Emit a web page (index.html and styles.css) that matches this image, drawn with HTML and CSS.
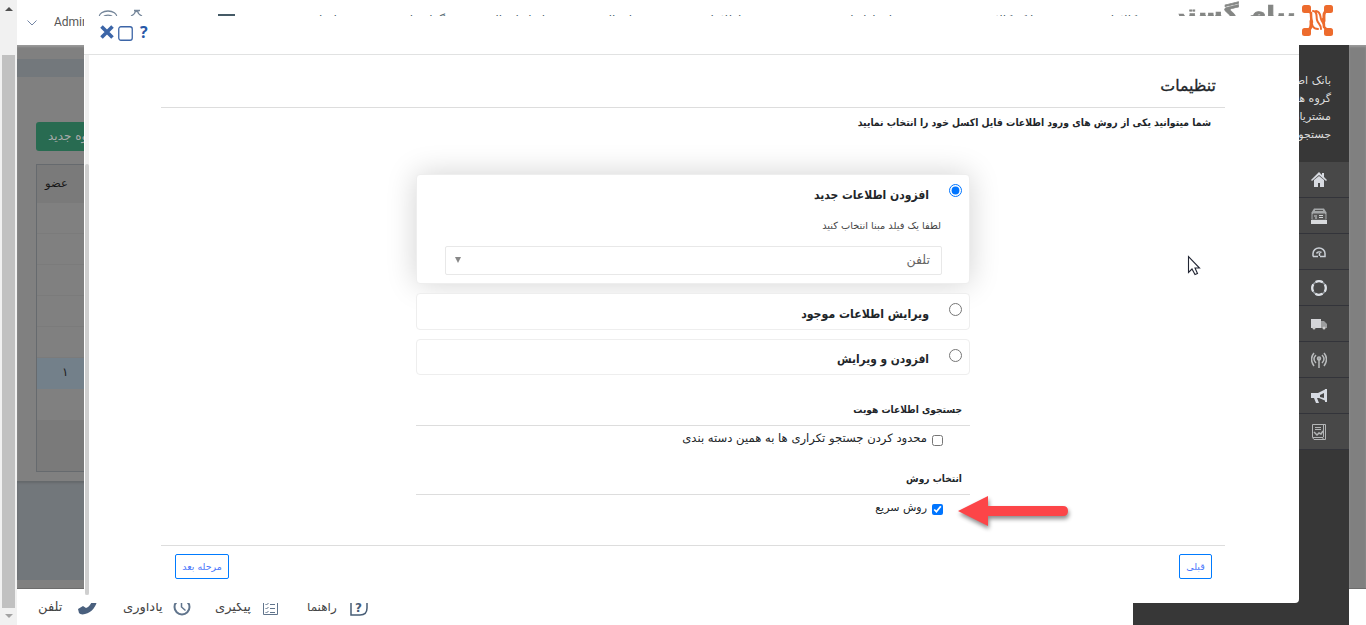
FILE: index.html
```html
<!DOCTYPE html>
<html lang="fa">
<head>
<meta charset="utf-8">
<title>تنظیمات</title>
<link rel="stylesheet" href="styles.css">
</head>
<body>
<div class="window">
  <div class="scrollbar">
    <span class="arrow up"></span><span class="thumb"></span><span class="arrow down"></span>
  </div>
  <div class="page">
    <header class="topbar">
      <svg class="chevron" width="10" height="6" viewBox="0 0 10 6"><path d="M.5.5 5 5 9.500.5" fill="none" stroke="#7385a5"/></svg>
      <span class="user">Admin</span>
      <svg class="top-icons" width="145" height="20" viewBox="0 0 145 20" fill="none" stroke="#75869a" stroke-width="1.300"><path d="M1 12a9 6 0 0 1 18 0M5 12a6 4 0 0 1 10 0M33 11c2-1 4-3 4-4a2 2 0 0 1 3 0c0 1 2 3 4 4M36 5.500h6"/><path d="M120 10h17" stroke="#455a66" stroke-width="2"/></svg>
      <nav class="nav" dir="rtl">
        <span>کالاها</span><span>بانک کالا</span><span>ارتباط با مشتری</span><span>مدیریت اطلاعات</span><span>انتقال</span><span>ابزار انتقال</span><span>گزارشات</span><span>تنظیمات</span>
      </nav>
      <span class="brand" dir="rtl">پیام گستر</span>
      <svg class="logo" width="31" height="31" viewBox="0 0 31 31"><g fill="#ed6b2d"><rect width="9" height="8" rx="2.500"/><rect x="22" width="9" height="8" rx="2.500"/><rect y="23" width="9" height="8" rx="2.500"/><rect x="22" y="23" width="9" height="8" rx="2.500"/></g><g fill="none" stroke="#ed6b2d" stroke-linecap="round"><path d="M6 6l3 2q0 7 1 9M25 25l-3-3q0-6-1-8" stroke-width="2.500"/><path d="M11 6c5 0 3 6 4 9 1 4 4 4 4 9M14 6c5 1 4 5 5 8 1 4 3 3 3 8M9 13c0 6 2 11 7 11" stroke-width="2"/><path d="M25 6c-4 1-3 5-3 10M6 25c4-1 3-5 3-9" stroke-width="3"/></g></svg>
    </header>
    <main class="workspace">
      <section class="content">
        <div class="crumb"></div>
        <div class="panel">
          <div class="new-group" dir="rtl">گروه جدید</div>
          <div class="grid">
            <div class="grid-head">عضو</div>
            <div class="row"></div><div class="row"></div><div class="row"></div><div class="row"></div><div class="row"></div>
            <div class="row active">۱</div><div class="row plain"></div>
            <div class="grid-foot"></div>
          </div>
        </div>
        <div class="below"></div>
      </section>
    </main>
    <footer class="dock" dir="ltr">
      <span class="d1">تلفن</span>
      <svg class="i1" width="19" height="18" viewBox="0 0 19 18"><path d="M13 0l6 2c0 5-5 13-12 14-3 1-5 0-6-1l-1-4 5-3 3 2c3-1 5-4 6-7l-1-3z" fill="#4a607e"/></svg>
      <span class="d2">یادآوری</span>
      <svg class="i2" width="18" height="18" viewBox="0 0 18 18" fill="none" stroke="#60748c" stroke-width="2"><circle cx="9" cy="9" r="7.500"/><path d="M8.500 4v5l4 3.500" stroke-width="1.500"/></svg>
      <span class="d3">پیگیری</span>
      <svg class="i3" width="15" height="18" viewBox="0 0 15 18" fill="none" stroke="#60748c"><path d="M.5.5h14v16H.5z"/><path d="M2.500 6l1 1 2-2M2.500 10l1 1 2-2M2.500 14l1 1 2-2M7 6.500h5M7 10.500h5M7 14.500h5"/></svg>
      <span class="d4">راهنما</span>
      <svg class="i4" width="19" height="19" viewBox="0 0 19 19"><path d="M1 17V1h16v9q0 7-7 7z" fill="none" stroke="#485d76" stroke-width="1.500"/><text x="5" y="14" class="q">?</text></svg>
    </footer>
  </div>
  <aside class="sidebar">
    <div class="links" dir="rtl"><div>بانک اطلاعات</div><div>گروه های</div><div>مشتریان من</div><div>جستجوی</div></div>
    <div class="tool"><svg viewBox="0 0 16 16"><path d="M0 8 8 0l3 3V1h2v4l3 3-1 1-7-6-7 6zM3 8l5-4 5 4v7H9v-4H7v4H3z" fill="#d7dae0"/></svg></div>
    <div class="tool"><svg viewBox="0 0 16 16"><path d="M3 .5h10l2.500 4v7H.5v-7z" fill="#a5a8a9"/><path d="M4 2.500h8M2 6h12v5H2z" fill="#555" stroke="#555"/><path d="M3 8h3M8 7.500h4M8 9.500h4M4 10h2" stroke="#d0d3d4"/><path d="M0 12h16v4H0z" fill="#d8dadd"/></svg></div>
    <div class="tool"><svg viewBox="0 0 16 16"><path d="M2 12.500V9.500a6 5.500 0 0 1 12 0v3H9M2 12.500h5M5.500 9.500a3.500 3 0 0 1 5-1M8.500 12V9" fill="none" stroke="#cbd0d6" stroke-width="1.500"/></svg></div>
    <div class="tool"><svg viewBox="0 0 16 16" fill="none"><circle cx="8" cy="8" r="6.800" stroke="#999fa5" stroke-width="1.500"/><circle cx="8" cy="8" r="6.800" stroke="#dde1e6" stroke-width="2.300" stroke-dasharray="7.500 3.181" stroke-dashoffset="3.750"/></svg></div>
    <div class="tool"><svg viewBox="0 0 16 16"><path d="M0 3h10v9H0z" fill="#d4d5d8"/><path d="M10 5h3l3 3v4h-6z" fill="#9c9d9e"/><circle cx="3" cy="12" r="1.500" fill="#ccc"/><circle cx="13" cy="12" r="1.500" fill="#ccc"/></svg></div>
    <div class="tool"><svg viewBox="0 0 16 16" fill="none" stroke="#b8babb" stroke-width="1.500"><path d="M3 1Q-2 7 3 14M13 1q5 6 0 13M5 3Q1 7 5 11M11 3q4 4 0 8M8 6v10"/><circle cx="8" cy="6.500" r="1.500"/></svg></div>
    <div class="tool"><svg viewBox="0 0 16 16"><path d="M0 5h7l8-4v12l-7-3H6l2 5H5L3 10H0z" fill="#d7dbe3"/><path d="M9 7l4-2v5L9 9z" fill="#484848"/><path d="M15 1v13" stroke="#d7dbe3" stroke-width="2"/></svg></div>
    <div class="tool"><svg viewBox="0 0 16 16" fill="none" stroke="#b3b5b6"><path d="M2 .5h12.500v15H3l-1.500-2V.5zM2 13.500h10v2M12.500 1v12M4 3.500h6M4 5.500h6"/><path d="M3 8l3 3 2-2 2 1 2-3" stroke-width="1.500"/></svg></div>
  </aside>
  <div class="gutter"><div class="shade"></div></div>
</div>

<div class="modal">
  <div class="modal-head">
    <svg class="x" width="14" height="14" viewBox="0 0 14 14"><path d="M1.500 1.500l11 11M12.500 1.500l-11 11" stroke="#3c65a7" stroke-width="3.600"/></svg>
    <svg class="sq" width="15" height="15" viewBox="0 0 15 15"><rect x=".75" y=".75" width="13.500" height="13.500" rx="2.200" fill="none" stroke="#3c65a7" stroke-width="1.300"/></svg>
    <span class="help">?</span>
  </div>
  <div class="modal-body">
    <div class="inner-scroll"><div class="inner-thumb"></div></div>
    <div class="form" dir="rtl">
      <h1>تنظیمات</h1>
      <p class="intro"><span>شما میتوانید یکی از روش های ورود اطلاعات فایل اکسل خود را انتخاب نمایید</span></p>
      <div class="column">
        <div class="card open">
          <input type="radio" name="mode" checked>
          <div class="card-main">
            <label class="t1">افزودن اطلاعات جدید</label>
            <div class="hint">لطفا یک فیلد مبنا انتخاب کنید</div>
            <div class="select"><span>تلفن</span><svg width="6" height="7" viewBox="0 0 6 7"><path d="M0 0h6L3 6z" fill="#888"/></svg></div>
          </div>
        </div>
        <div class="card"><input type="radio" name="mode"><label class="t2">ویرایش اطلاعات موجود</label></div>
        <div class="card third"><input type="radio" name="mode"><label class="t3">افزودن و ویرایش</label></div>
        <h2 class="h-a">جستجوی اطلاعات هویت</h2>
        <div class="check"><input type="checkbox"><label class="c1">محدود کردن جستجو تکراری ها به همین دسته بندی</label></div>
        <h2 class="h-b">انتخاب روش</h2>
        <div class="check"><input type="checkbox" checked><label class="c2">روش سریع</label></div>
      </div>
      <div class="actions"><button class="prev">قبلی</button><button class="next">مرحله بعد</button></div>
    </div>
  </div>
</div>
<svg class="pointer" width="14" height="22" viewBox="0 0 14 22"><path d="M1.500 1.500v16l3.500-3.500 3 5.500 2.500-1-2.500-5.500h4.500z" fill="#fff" stroke="#222634" stroke-width="1.100"/></svg>
<svg class="callout" width="120" height="44" viewBox="0 0 120 44"><path d="M3 18 33 3v10h75q5 0 5 5t-5 5H33v10z" fill="#fc4548"/></svg>
</body>
</html>
```
FILE: styles.css
```css
* { box-sizing: border-box; }
body { margin: 0; width: 1366px; height: 625px; overflow: hidden; font-family: "DejaVu Sans", sans-serif; background: #fff; color: #212529; position: relative; }
svg { flex: none; display: block; }
.window { display: grid; grid-template-columns: 17px 1116px 216px 17px; height: 625px; }
.scrollbar { background: #f1f1f1; display: flex; flex-direction: column; align-items: center; padding: 7px 0 7px; }
.arrow { border: 4px solid transparent; border-top: 0; }
.arrow.up { border-bottom-color: #505050; }
.arrow.down { border-bottom: 0; border-top: 4px solid #a3a3a3; margin-top: 6px; }
.thumb { width: 13px; flex: 1; margin-top: 44px; background: #c1c1c1; }
.page { display: flex; flex-direction: column; min-width: 0; }
.topbar { width: 1349px; height: 45px; flex: none; background: #fff; display: flex; align-items: flex-start; }
.topbar > * { flex: none; }
.chevron { margin: 20px 0 0 10px; }
.user { font: 12px/16px Roboto, sans-serif; color: #555; margin: 14px 0 0 17px; width: 40px; }
.top-icons { margin: 5px 0 0 4px; }
.nav { display: grid; grid-template-columns: 100px 145px 109px 151px 87px 100px 95px 60px; width: 847px; margin: 10px 0 0 47px; font-size: 12px; line-height: 20px; color: #455a66; white-space: nowrap; height: 24px; }
.brand { font: bold 19px/25px "DejaVu Sans", sans-serif; color: #848684; width: 116px; white-space: nowrap; margin: 0 0 0 43px; transform: scaleX(1.35); transform-origin: right; -webkit-text-stroke: .6px #848684; }
.logo { margin: 5px 0 0 6px; }
.workspace { height: 544px; flex: none; }
.content { height: 544px; background: #808080; border-bottom: 1px solid #6c6c6c; display: flex; flex-direction: column; box-shadow: inset 0 2px 2px #999; }
.crumb { height: 18px; background: #73787c; margin-top: 14px; flex: none; }
.panel { padding: 45px 0 0 19px; height: 404px; flex: none; }
.new-group { width: 90px; height: 29px; background: #286b51; border-radius: 3px; color: #aaa; font: 12px/28px "DejaVu Sans", sans-serif; direction: rtl; text-align: left; padding-left: 12px; }
.grid { width: 600px; height: 308px; margin-top: 13px; border: 1px solid #666a6e; }
.grid-head { height: 38px; background: #7a7a7a; font-size: 11.500px; line-height: 36px; padding-left: 8px; color: #161616; }
.row { height: 31px; border-bottom: 1px solid #7b7b7b; line-height: 29px; padding-left: 25px; font-size: 12px; }
.row.active { background: #73808a; border: 0; color: #222; }
.row.plain { border: 0; }
.grid-foot { height: 51px; background: #7a7a7a; }
.below { height: 99px; background: #72777b; box-shadow: inset 0 2px 2px #65696c; }
.dock { height: 36px; background: #fff; display: flex; align-items: flex-start; padding: 9px 0 0 21px; font-size: 13px; line-height: 18px; color: #454545; white-space: nowrap; }
.dock span { flex: none; }
.d1 { width: 40px; }
.d2 { width: 50px; margin-left: 26px; }
.d3 { width: 48px; margin-left: 24px; }
.d4 { width: 43px; margin-left: 29px; font-size: 12px; }
.q { font: bold 12px "DejaVu Sans", sans-serif; fill: #485d76; }
.sidebar { margin-top: 45px; background: #373737; display: flex; flex-direction: column; }
.links { height: 117px; padding: 27px 18px 0 0; font-size: 11px; line-height: 18px; color: #ddd; white-space: nowrap; flex: none; }
.tool { height: 36px; background: #484848; border-bottom: 1px solid #33343a; display: flex; justify-content: flex-end; align-items: center; padding: 0 22px 0 0; flex: none; }
.tool svg { width: 16px; height: 16px; }
.gutter { padding-top: 45px; }
.shade { height: 544px; background: #808080; border-bottom: 1px solid #6c6c6c; box-shadow: inset 0 2px 2px #999; }

.modal { position: absolute; left: 84px; top: 16px; width: 1215px; height: 587px; background: #fff; border-radius: 0 0 4px 4px; }
.modal-head { height: 39px; border-bottom: 1px solid #e1e2e2; padding: 9px 0 0 16px; display: flex; }
.modal-head .sq { margin: .5px 0 0 4px; }
.help { font: bold 16px/16px "Open Sans", sans-serif; color: #2858a8; margin: -1px 0 0 7px; }
.modal-body { display: flex; height: 548px; padding-left: 1px; }
.inner-scroll { width: 4px; height: 540px; background: #f0f0f0; padding-top: 109px; }
.inner-thumb { height: 431px; background: #cfcfcf; border-radius: 2px; }
.form { width: 1064px; margin-left: 72px; }
h1 { margin: 0; height: 53px; border-bottom: 1px solid #ddd; padding-right: 9px; font-size: 15.800px; font-weight: normal; line-height: 62px; -webkit-text-stroke: .3px; }
.intro { margin: 0; height: 66px; padding-right: 14px; font: bold 10.300px/28px "DejaVu Sans Condensed", "DejaVu Sans", sans-serif; white-space: nowrap; }
.column { width: 554px; margin-right: 255px; height: 371px; display: flex; flex-direction: column; }
.card { height: 37px; margin-top: 9px; border: 1px solid #eee; border-radius: 4px; display: flex; align-items: flex-start; background: #fff; flex: none; position: relative; }
.card input { margin: 9px 7px 0 0; width: 13px; height: 13px; flex: none; }
.card label { font: bold 12px/40px "DejaVu Sans Condensed", "DejaVu Sans", sans-serif; white-space: nowrap; margin-right: 20px; }
.card .t2 { font-size: 12.200px; }
.card.third { height: 36px; }
.card .t3 { font-size: 11.800px; line-height: 38px; }
.open { height: 110px; margin-top: 0; box-shadow: 0 0 30px rgba(0,0,0,.18); }
.card-main { width: 505px; }
.card.open label { display: block; }
.hint { font-size: 9.800px; line-height: 18px; margin: 2px 8px 0 0; color: #444; }
.select { height: 29px; width: 497px; margin: 11px 7px 0 0; border: 1px solid #e8e8e8; border-radius: 2px; display: flex; justify-content: space-between; padding: 0 11px 0 9px; font-size: 12.500px; line-height: 26px; color: #666; }
.select svg { margin-top: 10px; }
h2 { margin: 0; font: bold 10.100px/20px "DejaVu Sans Condensed", "DejaVu Sans", sans-serif; padding-right: 8px; border-bottom: 1px solid #ddd; flex: none; }
.h-a { height: 51px; line-height: 70px; }
.h-b { height: 30px; line-height: 28px; margin-top: 14px; }
.check { height: 25px; display: flex; align-items: flex-start; padding-right: 27px; flex: none; }
.check input { width: 11px; height: 11px; margin: 9px 0 0; flex: none; }
.check label { font-size: 11.600px; line-height: 24px; margin-right: 5px; white-space: nowrap; }
.check .c2 { font-size: 11px; line-height: 26px; }
.actions { border-top: 1px solid #ddd; display: flex; justify-content: space-between; padding: 8px 13px 0 14px; }
button { height: 25px; border: 1px solid #007bff; border-radius: 2px; background: #fff; color: #4b77fb; font: 9.500px "DejaVu Sans", sans-serif; padding: 0; white-space: nowrap; }
.prev { width: 33px; }
.next { width: 54px; }
.pointer { position: absolute; left: 1187px; top: 255px; }
.callout { position: absolute; left: 955px; top: 493px; filter: drop-shadow(1px 3px 2px rgba(0,0,0,.45)); }
```
